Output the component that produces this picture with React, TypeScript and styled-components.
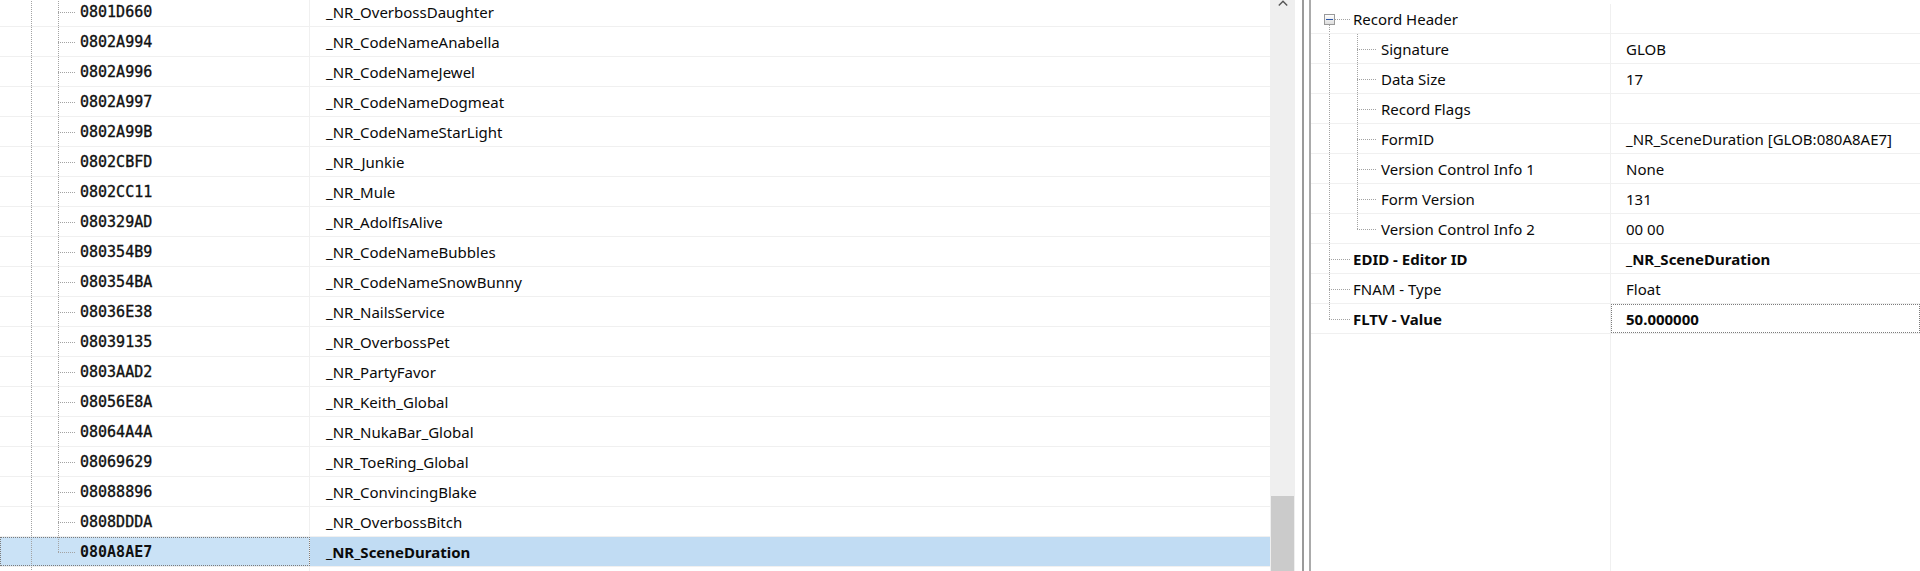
import React from 'react';
import styled, { createGlobalStyle } from 'styled-components';

const UI_FONT = `"Noto Sans", "Open Sans", sans-serif`;
const MONO_FONT = `"DejaVu Sans Mono", "Liberation Mono", monospace`;

const dotV = 'repeating-linear-gradient(to bottom, #a3a3a3 0 1px, transparent 1px 2px)';
const dotH = 'repeating-linear-gradient(to right, #a3a3a3 0 1px, transparent 1px 2px)';

const GlobalStyle = createGlobalStyle`
  html, body { margin: 0; padding: 0; background: #fff; }
  body { width: 1920px; height: 571px; overflow: hidden; }
`;

const Window = styled.div`
  display: flex;
  width: 1920px;
  height: 571px;
  overflow: hidden;
  background: #fff;
  font-family: ${UI_FONT};
  font-size: 15px;
  color: #0a0a0a;
`;

/* ---------- record list (left) ---------- */

const ListPane = styled.div`
  flex: none;
  width: 1295px;
  display: flex;
`;

const ListViewport = styled.div`
  flex: 1;
  display: flex;
  flex-direction: column;
  overflow: hidden;
`;

const ListBody = styled.div`
  flex: 1;
  display: flex;
  flex-direction: column;
  margin-top: -3px;
`;

const ListRow = styled.div`
  flex: none;
  display: grid;
  grid-template-columns: 310px 1fr;
  height: 30px;
  box-sizing: border-box;
  border-bottom: 1px solid #f0f0f0;
`;

const ListFiller = styled.div`
  flex: 1;
  display: grid;
  grid-template-columns: 310px 1fr;
`;

const IdCell = styled.div<{ $selected?: boolean }>`
  display: flex;
  align-items: stretch;
  box-sizing: border-box;
  border-right: 1px solid #f0f0f0;
  background: ${p => (p.$selected ? '#cae2f6' : 'transparent')};
  outline: ${p => (p.$selected ? '1px dotted #7c7c7c' : 'none')};
  outline-offset: -1px;
`;

const NameCell = styled.div<{ $selected?: boolean }>`
  display: flex;
  align-items: center;
  padding-left: 16px;
  background: ${p => (p.$selected ? '#c1dcf3' : 'transparent')};
  font-weight: ${p => (p.$selected ? 700 : 400)};
  white-space: nowrap;
`;

const Lead = styled.span<{ $w: number }>`
  flex: none;
  width: ${p => p.$w}px;
`;

const Guide = styled.span<{ $w: number; $x?: number }>`
  flex: none;
  width: ${p => p.$w}px;
  background: ${dotV} ${p => p.$x ?? 0}px 0 / 1px 100% no-repeat;
`;

const Branch = styled.span<{ $w: number; $x?: number; $len: number; $last?: boolean }>`
  flex: none;
  width: ${p => p.$w}px;
  background:
    ${dotV} ${p => p.$x ?? 0}px 0 / 1px ${p => (p.$last ? '16px' : '100%')} no-repeat,
    ${dotH} ${p => p.$x ?? 0}px 15px / ${p => p.$len}px 1px no-repeat;
`;

const HexText = styled.span<{ $selected?: boolean }>`
  display: flex;
  align-items: center;
  font-family: ${MONO_FONT};
  font-size: 15px;
  font-weight: ${p => (p.$selected ? 700 : 400)};
  -webkit-text-stroke: ${p => (p.$selected ? '0' : '0.35px')};
  color: #111;
  white-space: nowrap;
`;

const Scrollbar = styled.div`
  flex: none;
  width: 25px;
  display: flex;
  flex-direction: column;
  align-items: center;
  background: #efefef;
`;

const ScrollArrow = styled.svg`
  flex: none;
  display: block;
`;

const ScrollThumb = styled.div`
  margin-top: auto;
  width: 23px;
  height: 75px;
  background: #cbcbcb;
`;

/* ---------- splitter ---------- */

const Splitter = styled.div`
  flex: none;
  width: 16px;
  display: flex;
  background: #fff;
`;

const SplitLine = styled.span<{ $gap: number; $color: string }>`
  flex: none;
  width: 2px;
  margin-left: ${p => p.$gap}px;
  background: ${p => p.$color};
`;

/* ---------- element view (right) ---------- */

const ViewPane = styled.div`
  flex: 1;
  display: flex;
  flex-direction: column;
  padding-top: 4px;
  overflow: hidden;
`;

const ViewRow = styled.div`
  flex: none;
  display: grid;
  grid-template-columns: 300px 1fr;
  height: 30px;
  box-sizing: border-box;
  border-bottom: 1px solid #f0f0f0;
`;

const ViewFiller = styled.div`
  flex: 1;
  display: grid;
  grid-template-columns: 300px 1fr;
`;

const LabelCell = styled.div`
  display: flex;
  align-items: stretch;
  box-sizing: border-box;
  border-right: 1px solid #f0f0f0;
`;

const LabelText = styled.span<{ $bold?: boolean }>`
  display: flex;
  align-items: center;
  padding-left: 1px;
  font-weight: ${p => (p.$bold ? 700 : 400)};
  white-space: nowrap;
`;

const ValueCell = styled.div<{ $bold?: boolean; $focused?: boolean }>`
  display: flex;
  align-items: center;
  padding-left: 15px;
  font-weight: ${p => (p.$bold ? 700 : 400)};
  white-space: nowrap;
  outline: ${p => (p.$focused ? '1px dotted #7c7c7c' : 'none')};
  outline-offset: -1px;
`;

const ExpanderCol = styled.span`
  flex: none;
  width: 28px;
  display: flex;
  align-items: flex-start;
  box-sizing: border-box;
  padding-top: 10px;
  background:
    ${dotV} 5px 21px / 1px calc(100% - 21px) no-repeat,
    ${dotH} 11px 15px / 15px 1px no-repeat;
`;

const ExpandBox = styled.span`
  width: 11px;
  height: 11px;
  box-sizing: border-box;
  border: 1px solid #999;
  background: linear-gradient(#fefefe, #dedede);
  display: flex;
  align-items: center;
  justify-content: center;

  &::after {
    content: '';
    width: 7px;
    height: 1px;
    background: #2a55a8;
  }
`;

type RecordItem = { id: string; name: string; selected?: boolean };

const records: RecordItem[] = [
  { id: '0801D660', name: '_NR_OverbossDaughter' },
  { id: '0802A994', name: '_NR_CodeNameAnabella' },
  { id: '0802A996', name: '_NR_CodeNameJewel' },
  { id: '0802A997', name: '_NR_CodeNameDogmeat' },
  { id: '0802A99B', name: '_NR_CodeNameStarLight' },
  { id: '0802CBFD', name: '_NR_Junkie' },
  { id: '0802CC11', name: '_NR_Mule' },
  { id: '080329AD', name: '_NR_AdolfIsAlive' },
  { id: '080354B9', name: '_NR_CodeNameBubbles' },
  { id: '080354BA', name: '_NR_CodeNameSnowBunny' },
  { id: '08036E38', name: '_NR_NailsService' },
  { id: '08039135', name: '_NR_OverbossPet' },
  { id: '0803AAD2', name: '_NR_PartyFavor' },
  { id: '08056E8A', name: '_NR_Keith_Global' },
  { id: '08064A4A', name: '_NR_NukaBar_Global' },
  { id: '08069629', name: '_NR_ToeRing_Global' },
  { id: '08088896', name: '_NR_ConvincingBlake' },
  { id: '0808DDDA', name: '_NR_OverbossBitch' },
  { id: '080A8AE7', name: '_NR_SceneDuration', selected: true },
];

type Field = { label: string; value: string; bold?: boolean };

const headerFields: Field[] = [
  { label: 'Signature', value: 'GLOB' },
  { label: 'Data Size', value: '17' },
  { label: 'Record Flags', value: '' },
  { label: 'FormID', value: '_NR_SceneDuration [GLOB:080A8AE7]' },
  { label: 'Version Control Info 1', value: 'None' },
  { label: 'Form Version', value: '131' },
  { label: 'Version Control Info 2', value: '00 00' },
];

const topFields: (Field & { focused?: boolean })[] = [
  { label: 'EDID - Editor ID', value: '_NR_SceneDuration', bold: true },
  { label: 'FNAM - Type', value: 'Float' },
  { label: 'FLTV - Value', value: '50.000000', bold: true, focused: true },
];

export default function App() {
  return (
    <>
      <GlobalStyle />
      <Window>
        <ListPane>
          <ListViewport>
            <ListBody>
              {records.map((r, i) => (
                <ListRow key={r.id}>
                  <IdCell $selected={r.selected}>
                    <Lead $w={31} />
                    <Guide $w={27} />
                    <Branch $w={22} $len={18} $last={i === records.length - 1} />
                    <HexText $selected={r.selected}>{r.id}</HexText>
                  </IdCell>
                  <NameCell $selected={r.selected}>{r.name}</NameCell>
                </ListRow>
              ))}
              <ListFiller>
                <IdCell>
                  <Lead $w={31} />
                  <Guide $w={27} />
                </IdCell>
                <div />
              </ListFiller>
            </ListBody>
          </ListViewport>
          <Scrollbar>
            <ScrollArrow width="10" height="6" viewBox="0 0 10 6">
              <polyline points="0.8,5.4 5,1.2 9.2,5.4" fill="none" stroke="#555" strokeWidth="1.4" />
            </ScrollArrow>
            <ScrollThumb />
          </Scrollbar>
        </ListPane>

        <Splitter>
          <SplitLine $gap={7} $color="#9a9a9a" />
          <SplitLine $gap={5} $color="#ababab" />
        </Splitter>

        <ViewPane>
          <ViewRow>
            <LabelCell>
              <Lead $w={13} />
              <ExpanderCol>
                <ExpandBox />
              </ExpanderCol>
              <LabelText>Record Header</LabelText>
            </LabelCell>
            <ValueCell />
          </ViewRow>
          {headerFields.map((f, i) => (
            <ViewRow key={f.label}>
              <LabelCell>
                <Lead $w={13} />
                <Guide $w={28} $x={5} />
                <Branch $w={28} $x={5} $len={20} $last={i === headerFields.length - 1} />
                <LabelText>{f.label}</LabelText>
              </LabelCell>
              <ValueCell>{f.value}</ValueCell>
            </ViewRow>
          ))}
          {topFields.map((f, i) => (
            <ViewRow key={f.label}>
              <LabelCell>
                <Lead $w={13} />
                <Branch $w={28} $x={5} $len={21} $last={i === topFields.length - 1} />
                <LabelText $bold={f.bold}>{f.label}</LabelText>
              </LabelCell>
              <ValueCell $bold={f.bold} $focused={f.focused}>
                {f.value}
              </ValueCell>
            </ViewRow>
          ))}
          <ViewFiller>
            <LabelCell />
            <div />
          </ViewFiller>
        </ViewPane>
      </Window>
    </>
  );
}
